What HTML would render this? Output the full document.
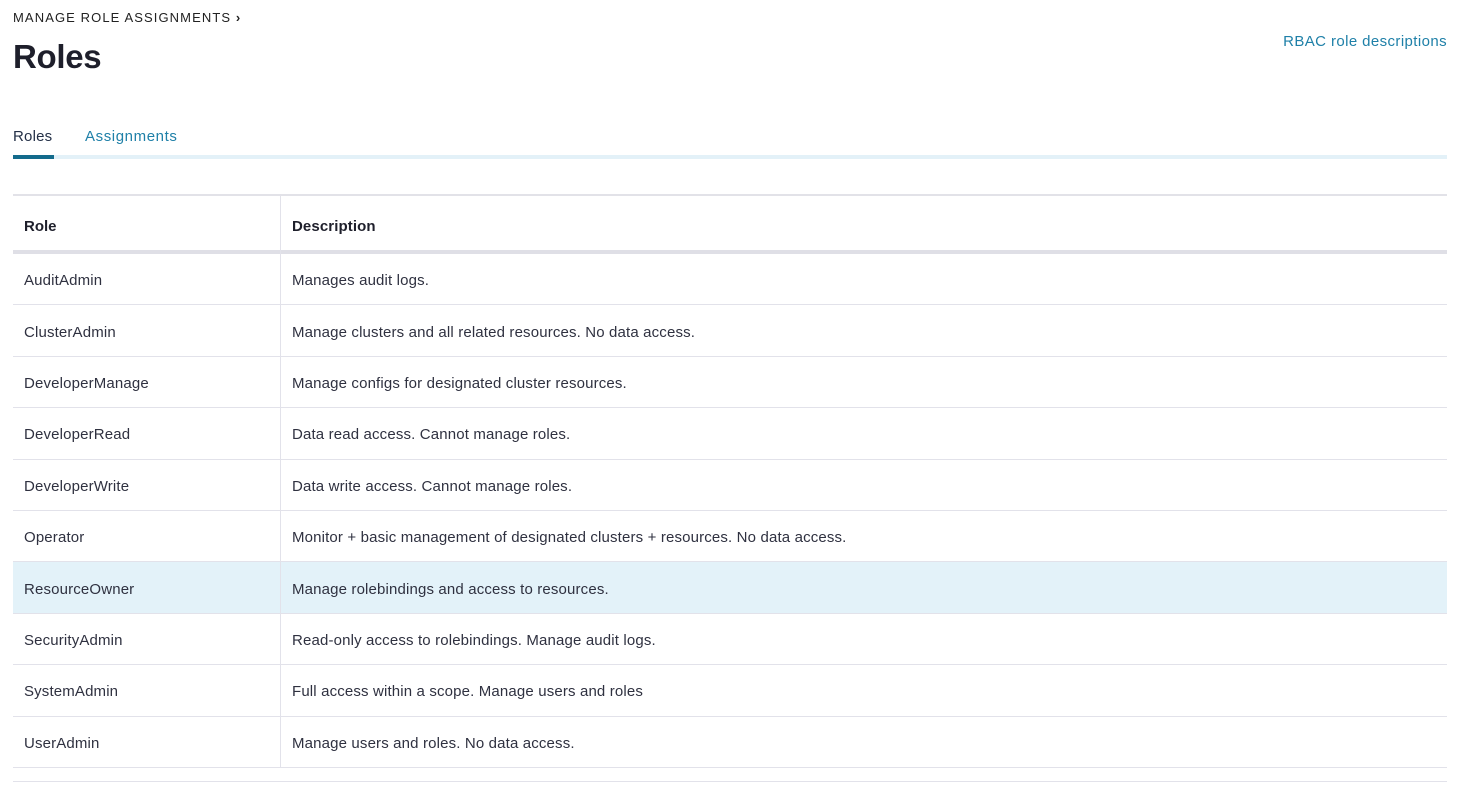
<!DOCTYPE html>
<html><head><style>
body{margin:0;width:1466px;height:804px;background:#fff;font-family:"Liberation Sans",sans-serif;color:#2a2c3a;position:relative;overflow:hidden}
.a{position:absolute}
.row{position:absolute;left:13px;width:1434px;border-bottom:1px solid #e2e2ea;box-sizing:border-box}
.row span{position:absolute;top:50%;transform:translateY(-40%);font-size:15px;letter-spacing:0.15px;color:#2f3140;white-space:nowrap}
.c1{left:11px}.c2{left:279px}
</style></head><body>
<div class="a" style="left:13px;top:10px;font-size:13px;letter-spacing:1.1px;color:#222;">MANAGE ROLE ASSIGNMENTS <b style="font-size:13px">›</b></div>
<div class="a" style="left:13px;top:38px;font-size:33px;font-weight:bold;color:#1e1f2b;letter-spacing:-0.3px">Roles</div>
<div class="a" style="right:19px;top:33px;font-size:15px;letter-spacing:0.4px;color:#1f80a8">RBAC role descriptions</div>
<div class="a" style="left:13px;top:128px;font-size:15px;letter-spacing:0.2px;color:#243047">Roles</div>
<div class="a" style="left:85px;top:128px;font-size:15px;letter-spacing:0.6px;color:#1f80a8">Assignments</div>
<div class="a" style="left:13px;top:155px;width:1434px;height:4px;background:#e3f1f8"></div>
<div class="a" style="left:13px;top:155px;width:41px;height:4px;background:#136b8c"></div>
<div class="a" style="left:13px;top:194px;width:1434px;height:2px;background:#e2e2e8"></div>
<div class="a" style="left:24px;top:218px;font-size:15px;font-weight:bold;color:#1e1f2b">Role</div>
<div class="a" style="left:292px;top:218px;font-size:15px;font-weight:bold;color:#1e1f2b;letter-spacing:0.1px">Description</div>
<div class="a" style="left:13px;top:250px;width:1434px;height:4px;background:#dfdfe6"></div>
<div class="a" style="left:280px;top:196px;width:1px;height:572px;background:#e2e2ea;z-index:2"></div>
<div class="row" style="top:254px;height:51.4px"><span class="c1">AuditAdmin</span><span class="c2">Manages audit logs.</span></div>
<div class="row" style="top:305.4px;height:51.4px"><span class="c1">ClusterAdmin</span><span class="c2">Manage clusters and all related resources. No data access.</span></div>
<div class="row" style="top:356.8px;height:51.4px"><span class="c1">DeveloperManage</span><span class="c2">Manage configs for designated cluster resources.</span></div>
<div class="row" style="top:408.2px;height:51.4px"><span class="c1">DeveloperRead</span><span class="c2">Data read access. Cannot manage roles.</span></div>
<div class="row" style="top:459.6px;height:51.4px"><span class="c1">DeveloperWrite</span><span class="c2">Data write access. Cannot manage roles.</span></div>
<div class="row" style="top:511px;height:51.4px"><span class="c1">Operator</span><span class="c2">Monitor + basic management of designated clusters + resources. No data access.</span></div>
<div class="row" style="top:562.4px;height:51.4px;background:#e3f2f9"><span class="c1">ResourceOwner</span><span class="c2">Manage rolebindings and access to resources.</span></div>
<div class="row" style="top:613.8px;height:51.4px"><span class="c1">SecurityAdmin</span><span class="c2">Read-only access to rolebindings. Manage audit logs.</span></div>
<div class="row" style="top:665.2px;height:51.4px"><span class="c1">SystemAdmin</span><span class="c2">Full access within a scope. Manage users and roles</span></div>
<div class="row" style="top:716.6px;height:51.4px"><span class="c1">UserAdmin</span><span class="c2">Manage users and roles. No data access.</span></div>
<div class="a" style="left:13px;top:781px;width:1434px;height:1px;background:#e2e2ea"></div>
</body></html>
